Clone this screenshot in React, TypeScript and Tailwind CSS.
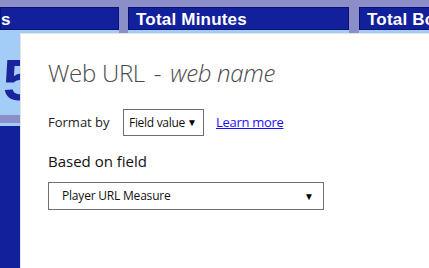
import React from 'react';

const HeaderCell: React.FC<{ label: string; className: string }> = ({ label, className }) => (
  <div className={`flex flex-col shrink-0 ${className}`}>
    <div className="h-[23px] bg-[#13209c] border border-[#0a1270] flex items-center px-[7px] overflow-hidden whitespace-nowrap">
      <span className="text-white font-bold text-[17px] leading-none tracking-[0.2px] mt-[2px]">{label}</span>
    </div>
    <div className="h-[3px] bg-[#a3cdf7]" />
  </div>
);

const App: React.FC = () => {
  return (
    <div className="relative w-[429px] h-[268px] overflow-hidden bg-[#8b8ec9] font-['Liberation_Sans',sans-serif]">
      {/* Background report table */}
      <div className="flex pt-[7px] gap-[9px]">
        <HeaderCell label="s" className="w-[119px] [&>div:first-child]:justify-start [&>div:first-child]:pl-0" />
        <HeaderCell label="Total Minutes" className="w-[221px]" />
        <HeaderCell label="Total Bo" className="w-[120px] ml-px" />
      </div>
      <div className="flex flex-col w-[20px] h-[240px]">
        <div className="h-[82px] bg-[#a3cdf7] overflow-hidden flex items-start">
          <span className="text-[#1a249c] font-bold text-[58px] leading-none mt-[18px] ml-[3px]">5</span>
        </div>
        <div className="h-[8px] bg-[#8b8ec9]" />
        <div className="h-[3px] bg-[#a3cdf7]" />
        <div className="flex-1 bg-[#13209c]" />
      </div>

      {/* Conditional formatting dialog */}
      <div className="absolute left-[20px] top-[33px] right-0 bottom-0 bg-white border-l border-t border-[#e4e4e4] pl-[27px] pt-[24px] font-['Open_Sans',sans-serif] text-[#333]">
        <h1 className="text-[24px] font-light leading-[30px] text-[#4a4a4a] tracking-[-0.3px]">
          Web URL <span className="mx-[3px]">-</span> <i>web name</i>
        </h1>
        <div className="flex items-center mt-[21px]">
          <span className="text-[13px] text-[#222] w-[75px]">Format by</span>
          <div className="flex items-center justify-between w-[81px] h-[27px] border border-[#6e6e6e] pl-[5px] pr-[6px]">
            <span className="text-[12px] text-[#111] tracking-[-0.3px]">Field value</span>
            <span className="text-[10px] text-black">▼</span>
          </div>
          <a href="#" className="ml-[12px] text-[13px] text-[#1a0dff] underline tracking-[-0.3px]">Learn more</a>
        </div>
        <div className="mt-[15px] text-[15px] text-[#111] leading-[20px]">Based on field</div>
        <div className="mt-[11px] w-[276px] h-[28px] border border-[#707070] flex items-center justify-between pl-[13px] pr-[9px]">
          <span className="text-[12px] text-[#111] tracking-[-0.2px]">Player URL Measure</span>
          <span className="text-[10px] text-black">▼</span>
        </div>
      </div>
    </div>
  );
};

export default App;
